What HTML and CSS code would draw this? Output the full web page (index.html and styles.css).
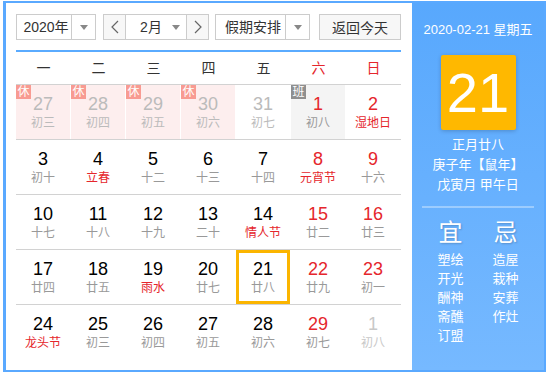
FILE: index.html
```html
<!DOCTYPE html>
<html lang="zh-CN">
<head>
  <meta charset="UTF-8">
  <title>万年历</title>
  <link rel="stylesheet" href="styles.css">
</head>
<body>

  <div class="calendar">
    <div class="main">

      <!-- 工具栏 -->
      <div class="toolbar">
        <div class="select year">
          <span class="val">2020年</span>
          <span class="arrow"><i class="tri"></i></span>
        </div>
        <div class="select month">
          <span class="nav prev">
            <svg width="8" height="14" viewBox="0 0 8 14"><polyline points="7,1 1,7 7,13" fill="none" stroke="#666" stroke-width="1.2"/></svg>
          </span>
          <span class="val">2月</span>
          <span class="arrow plain"><i class="tri"></i></span>
          <span class="nav next">
            <svg width="8" height="14" viewBox="0 0 8 14"><polyline points="1,1 7,7 1,13" fill="none" stroke="#666" stroke-width="1.2"/></svg>
          </span>
        </div>
        <div class="select holiday">
          <span class="val">假期安排</span>
          <span class="arrow"><i class="tri"></i></span>
        </div>
        <button class="today">返回今天</button>
      </div>

      <div class="line"></div>

      <!-- 星期 -->
      <div class="week">
        <span>一</span><span>二</span><span>三</span><span>四</span><span>五</span>
        <span class="red">六</span><span class="red">日</span>
      </div>

      <!-- 日期 -->
      <div class="row">
        <div class="cell rest other"><span class="tag">休</span><b class="num">27</b><span class="lunar">初三</span></div>
        <div class="cell rest other"><span class="tag">休</span><b class="num">28</b><span class="lunar">初四</span></div>
        <div class="cell rest other"><span class="tag">休</span><b class="num">29</b><span class="lunar">初五</span></div>
        <div class="cell rest other"><span class="tag">休</span><b class="num">30</b><span class="lunar">初六</span></div>
        <div class="cell other"><b class="num">31</b><span class="lunar">初七</span></div>
        <div class="cell work weekend"><span class="tag gray">班</span><b class="num">1</b><span class="lunar">初八</span></div>
        <div class="cell weekend"><b class="num">2</b><span class="lunar fest">湿地日</span></div>
      </div>
      <div class="row">
        <div class="cell"><b class="num">3</b><span class="lunar">初十</span></div>
        <div class="cell"><b class="num">4</b><span class="lunar fest">立春</span></div>
        <div class="cell"><b class="num">5</b><span class="lunar">十二</span></div>
        <div class="cell"><b class="num">6</b><span class="lunar">十三</span></div>
        <div class="cell"><b class="num">7</b><span class="lunar">十四</span></div>
        <div class="cell weekend"><b class="num">8</b><span class="lunar fest">元宵节</span></div>
        <div class="cell weekend"><b class="num">9</b><span class="lunar">十六</span></div>
      </div>
      <div class="row">
        <div class="cell"><b class="num">10</b><span class="lunar">十七</span></div>
        <div class="cell"><b class="num">11</b><span class="lunar">十八</span></div>
        <div class="cell"><b class="num">12</b><span class="lunar">十九</span></div>
        <div class="cell"><b class="num">13</b><span class="lunar">二十</span></div>
        <div class="cell"><b class="num">14</b><span class="lunar fest">情人节</span></div>
        <div class="cell weekend"><b class="num">15</b><span class="lunar">廿二</span></div>
        <div class="cell weekend"><b class="num">16</b><span class="lunar">廿三</span></div>
      </div>
      <div class="row">
        <div class="cell"><b class="num">17</b><span class="lunar">廿四</span></div>
        <div class="cell"><b class="num">18</b><span class="lunar">廿五</span></div>
        <div class="cell"><b class="num">19</b><span class="lunar fest">雨水</span></div>
        <div class="cell"><b class="num">20</b><span class="lunar">廿七</span></div>
        <div class="cell current"><b class="num">21</b><span class="lunar">廿八</span></div>
        <div class="cell weekend"><b class="num">22</b><span class="lunar">廿九</span></div>
        <div class="cell weekend"><b class="num">23</b><span class="lunar">初一</span></div>
      </div>
      <div class="row">
        <div class="cell"><b class="num">24</b><span class="lunar fest">龙头节</span></div>
        <div class="cell"><b class="num">25</b><span class="lunar">初三</span></div>
        <div class="cell"><b class="num">26</b><span class="lunar">初四</span></div>
        <div class="cell"><b class="num">27</b><span class="lunar">初五</span></div>
        <div class="cell"><b class="num">28</b><span class="lunar">初六</span></div>
        <div class="cell weekend"><b class="num">29</b><span class="lunar">初七</span></div>
        <div class="cell next-month"><b class="num">1</b><span class="lunar">初八</span></div>
      </div>
    </div>

    <!-- 右侧详情 -->
    <div class="side">
      <div class="date">2020-02-21 星期五</div>
      <div class="big">21</div>
      <div class="info">
        <div>正月廿八</div>
        <div>庚子年【鼠年】</div>
        <div>戊寅月 甲午日</div>
      </div>
      <div class="divider"></div>
      <div class="yiji">
        <div class="col">
          <h3>宜</h3>
          <div>塑绘</div><div>开光</div><div>酬神</div><div>斋醮</div><div>订盟</div>
        </div>
        <div class="col">
          <h3>忌</h3>
          <div>造屋</div><div>栽种</div><div>安葬</div><div>作灶</div>
        </div>
      </div>
    </div>
  </div>

</body>
</html>
```

FILE: styles.css
```css
/* alap */
*, *::before, *::after {
  box-sizing: border-box;
}
html, body {
  margin: 0;
  padding: 0;
  background: #fff;
  font-family: "Liberation Sans", "Noto Sans CJK SC", sans-serif;
}

/* keret */
.calendar {
  display: flex;
  width: max-content;
  margin: 1px 0 0 3px;
  border: 2px solid #5aa9ff;
  border-left-width: 3px;
}

/* bal oldal */
.main {
  width: 406px;
  padding: 11px 11px 11px 10px;
}

/* eszköztár */
.toolbar {
  display: flex;
  height: 26px;
  font-size: 14px;
  color: #333;
}
.select {
  display: flex;
  height: 26px;
  border: 1px solid #ccc;
  background: #fff;
}
.select .val {
  flex: 1;
  line-height: 24px;
  text-align: center;
}
.select .arrow {
  width: 24px;
  display: flex;
  align-items: center;
  justify-content: center;
  border-left: 1px solid #ccc;
}
.select .arrow.plain {
  border-left: none;
  width: 20px;
}
.tri {
  width: 0;
  height: 0;
  border-left: 4px solid transparent;
  border-right: 4px solid transparent;
  border-top: 5px solid #888;
}
.year {
  width: 80px;
}
.year .val {
  padding-left: 4px;
}
.month {
  width: 106px;
  margin-left: 7px;
}
.month .val {
  padding-left: 10px;
}
.nav {
  width: 22px;
  display: flex;
  align-items: center;
  justify-content: center;
  background: #f7f7f7;
}
.nav.prev {
  border-right: 1px solid #ccc;
}
.nav.next {
  border-left: 1px solid #ccc;
}
.holiday {
  width: 95px;
  margin-left: 6px;
}
.holiday .val {
  padding-left: 5px;
}
.today {
  width: 82px;
  height: 26px;
  margin-left: 9px;
  padding: 0;
  border: 1px solid #ccc;
  background: #f7f7f7;
  font: inherit;
  color: #333;
}

.line {
  height: 2px;
  margin-top: 10px;
  background: #5aabff;
}

/* hét napjai */
.week {
  display: grid;
  grid-template-columns: repeat(7, 55px);
  height: 32px;
  line-height: 32px;
  text-align: center;
  font-size: 14px;
  color: #333;
}
.red {
  color: #e5262c;
}

/* napok */
.row {
  display: grid;
  grid-template-columns: repeat(7, 55px);
  height: 55px;
  border-top: 1px solid #d2d2d2;
}
.cell {
  position: relative;
  display: flex;
  flex-direction: column;
  align-items: center;
  justify-content: center;
  border-right: 1px solid #fff;
}
.num {
  font-size: 18px;
  line-height: 22px;
  font-weight: normal;
  color: #000;
}
.lunar {
  font-size: 12px;
  line-height: 16px;
  color: #999;
}
.weekend .num,
.lunar.fest {
  color: #e5262c;
}
.other .num,
.other .lunar {
  color: #bbb;
}
.next-month .num,
.next-month .lunar {
  color: #c8c8c8;
}
.rest {
  background: #fdeeee;
}
.work {
  background: #f4f4f4;
}
.current {
  box-shadow: inset 0 0 0 3px #fbb500;
}

/* 休 / 班 jelzés */
.tag {
  position: absolute;
  left: 0;
  top: 0;
  width: 15px;
  height: 14px;
  font-size: 12px;
  line-height: 14px;
  text-align: center;
  color: #fff;
  background: #f89b92;
}
.tag.gray {
  background: #8f8f8f;
}

/* jobb oldal */
.side {
  width: 132px;
  padding: 17px 10px 0;
  background: linear-gradient(#58a8fd, #76b9ff);
  color: #fff;
  text-align: center;
}
.date {
  font-size: 13px;
  line-height: 20px;
}
.big {
  width: 75px;
  height: 75px;
  margin: 15px auto 0;
  background: #ffb800;
  border-radius: 2px;
  box-shadow: 0 1px 4px rgba(0, 0, 0, 0.2);
  font-family: "Liberation Sans", sans-serif;
  font-size: 56px;
  line-height: 75px;
}
.info {
  margin-top: 5px;
  font-size: 13px;
  line-height: 20px;
}
.divider {
  height: 2px;
  margin-top: 11px;
  background: rgba(255, 255, 255, 0.35);
}
.yiji {
  display: flex;
  justify-content: center;
  font-size: 13px;
  line-height: 19px;
}
.yiji .col {
  width: 55px;
}
.yiji h3 {
  margin: 10px 0 2px;
  font-size: 24px;
  line-height: 30px;
  font-weight: normal;
  text-shadow: 1px 1px 2px rgba(0, 0, 0, 0.2);
}
```
